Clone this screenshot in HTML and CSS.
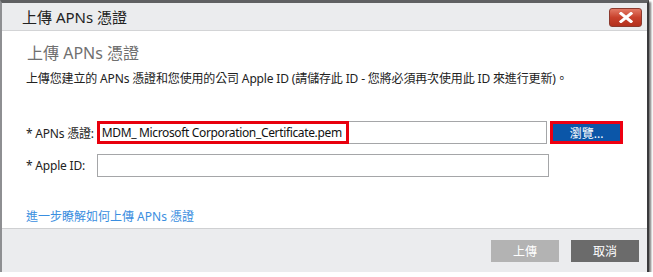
FILE: index.html
```html
<!DOCTYPE html>
<html>
<head>
  <title>上傳 APNs 憑證</title>
  <link rel="stylesheet" href="styles.css">
</head>
<body>
  <div class="dialog">
    <div class="titlebar">
      <span class="title">上傳 APNs 憑證</span>
      <button class="close">
        <svg width="14" height="11" viewBox="0 0 14 11">
          <path d="M2 1.5 L12 9.5 M12 1.5 L2 9.5" stroke="#fff" stroke-width="3" stroke-linecap="square"/>
        </svg>
      </button>
    </div>

    <div class="content">
      <h2>上傳 APNs 憑證</h2>
      <p class="desc">上傳您建立的 APNs 憑證和您使用的公司 Apple ID (請儲存此 ID - 您將必須再次使用此 ID 來進行更新)。</p>

      <div class="row">
        <label>* APNs 憑證:</label>
        <div class="field">
          <span class="filename">MDM_ Microsoft Corporation_Certificate.pem</span>
        </div>
        <button class="browse">瀏覽...</button>
      </div>

      <div class="row">
        <label>* Apple ID:</label>
        <div class="field"></div>
      </div>

      <a class="more" href="#">進一步瞭解如何上傳 APNs 憑證</a>
    </div>

    <div class="footer">
      <button class="btn upload">上傳</button>
      <button class="btn cancel">取消</button>
    </div>
  </div>
</body>
</html>
```

FILE: styles.css
```css
body {
  margin: 0;
  background: #fff;
  font-family: "Noto Sans", "Noto Sans CJK TC", sans-serif;
  color: #222;
}

.dialog {
  width: 645px;
  height: 269px;
  border-top: 3px solid #5f6062;
  border-left: 2px solid #8e8f92;
  border-right: 2px solid #3a3a3c;
  background: #fff;
  display: flex;
  flex-direction: column;
  box-shadow: 2px 2px 2px rgba(0, 0, 0, 0.55);
}

.titlebar {
  height: 27px;
  background: #ebecee;
  border-bottom: 1px solid #d3d4d6;
  display: flex;
  align-items: center;
  justify-content: space-between;
  padding: 0 5px 0 20px;
}

.title {
  font-size: 15px;
  color: #222;
}

.close {
  width: 33px;
  height: 19px;
  margin-top: 1px;
  border: 1px solid #8c3a2e;
  border-radius: 3px;
  background: linear-gradient(#e37a66, #c8412c 50%, #b3301d);
  display: flex;
  align-items: center;
  justify-content: center;
  padding: 0;
}

.content {
  flex: 1;
  padding: 0 24px;
}

.content h2 {
  font-size: 16px;
  font-weight: normal;
  color: #707070;
  margin: 11px 0 0 1px;
  line-height: 22px;
}

.desc {
  font-size: 12px;
  letter-spacing: -0.15px;
  margin: 7px 0 0;
  line-height: 16px;
  color: #222;
}

.row {
  display: flex;
  align-items: center;
  margin-top: 10px;
  height: 23px;
}

.row:first-of-type {
  margin-top: 34px;
}

.row label {
  width: 71px;
  font-size: 12px;
  letter-spacing: -0.2px;
  white-space: nowrap;
}

.field {
  width: 450px;
  height: 21px;
  border: 1px solid #a5a6a8;
  display: flex;
  align-items: center;
}

.filename {
  height: 17px;
  width: 244px;
  border: 3px solid #e8000d;
  font-size: 12px;
  letter-spacing: -0.35px;
  line-height: 17px;
  padding-left: 2px;
  margin-left: -1px;
  color: #111;
  white-space: nowrap;
  overflow: hidden;
}

.browse {
  margin-left: 3px;
  width: 73px;
  height: 23px;
  border: 3px solid #ee0011;
  background: #0b56a8;
  color: #fff;
  font-family: inherit;
  font-size: 12px;
  padding: 0;
}

.more {
  display: block;
  margin-top: 30px;
  font-size: 12px;
  color: #3a8ee0;
  text-decoration: none;
}

.footer {
  height: 43px;
  border-top: 1px solid #cfd0d2;
  background: #ebecee;
  display: flex;
  justify-content: flex-end;
  align-items: center;
  gap: 12px;
  padding-right: 8px;
}

.btn {
  width: 68px;
  height: 22px;
  border: none;
  color: #fff;
  font-family: inherit;
  font-size: 12px;
  padding: 0;
}

.upload {
  background: #b3b3b3;
}

.cancel {
  background: #6b6b6b;
}
```
